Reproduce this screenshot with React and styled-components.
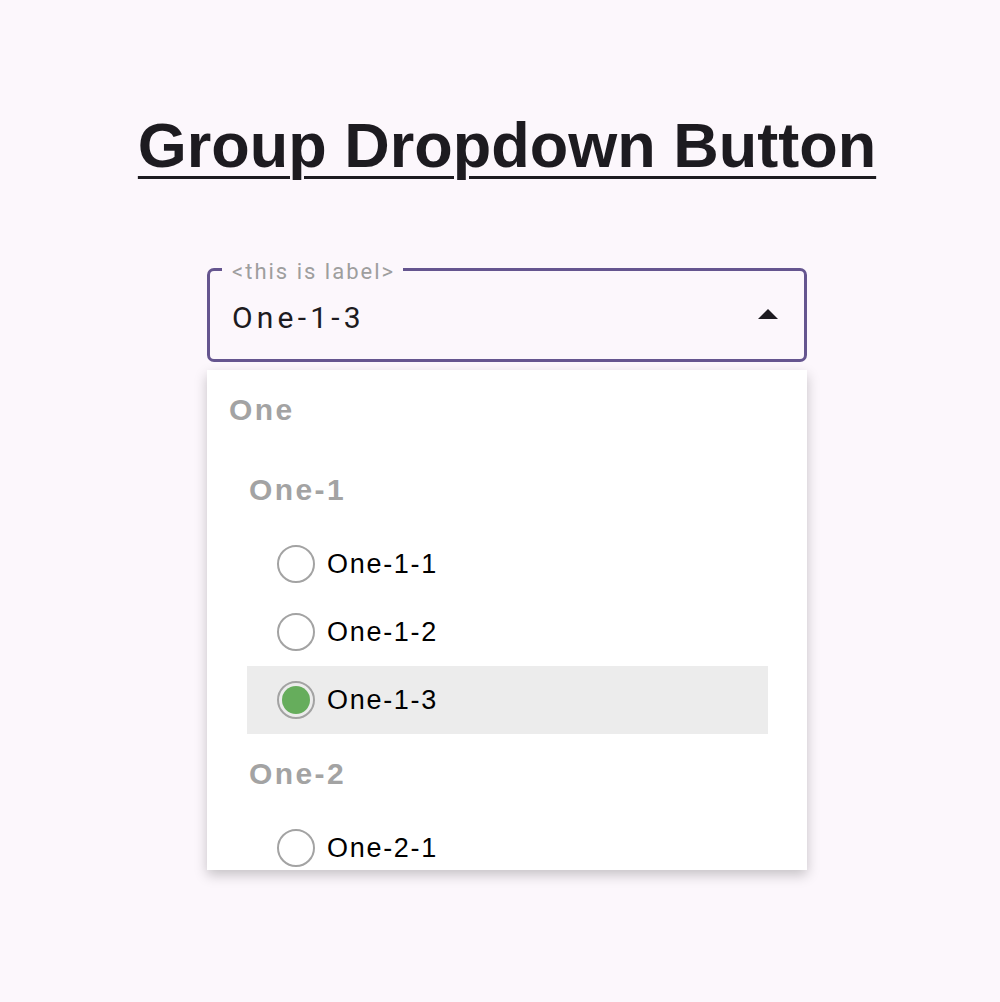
import React from "react";
import styled, { createGlobalStyle } from "styled-components";

const GlobalStyle = createGlobalStyle`
  body {
    margin: 0;
    background: #fcf7fc;
    font-family: "Liberation Sans", Arial, sans-serif;
  }
`;

const Page = styled.div`
  display: flex;
  flex-direction: column;
  align-items: center;
  padding: 109px 0 0 14px;
  min-height: 1002px;
  box-sizing: border-box;
`;

const Title = styled.h1`
  margin: 0;
  font-family: "Liberation Sans", Arial, sans-serif;
  font-size: 63px;
  font-weight: 700;
  line-height: normal;
  color: #1d1b20;
  text-decoration: underline;
  text-decoration-thickness: 3px;
  text-underline-offset: 9px;
`;

const Field = styled.div`
  position: relative;
  margin-top: 87px;
  width: 600px;
  height: 94px;
  box-sizing: border-box;
  border: 3px solid #65558f;
  border-radius: 7px;
  display: flex;
  align-items: center;
  justify-content: space-between;
  padding: 4px 26px 0 22px;
`;

const Label = styled.span`
  position: absolute;
  top: -12px;
  left: 12px;
  padding: 0 8px 0 10px;
  background: #fcf7fc;
  font-family: Roboto, "Liberation Sans", sans-serif;
  font-size: 22px;
  line-height: 26px;
  letter-spacing: 2px;
  color: #9e9e9e;
`;

const Value = styled.span`
  font-family: Roboto, "Liberation Sans", sans-serif;
  font-size: 30px;
  letter-spacing: 4.2px;
  color: #1d1b20;
`;

const Arrow = styled.svg`
  width: 20px;
  height: 10px;
  margin-top: -6px;
  fill: #1d1b20;
`;

const Menu = styled.div`
  margin-top: 8px;
  width: 600px;
  height: 500px;
  overflow: hidden;
  background: #fff;
  box-shadow: 0 5px 12px rgba(0, 0, 0, 0.22);
  padding: 0 39px 0 20px;
  box-sizing: border-box;
`;

const Group = styled.div`
  display: flex;
  flex-direction: column;
  padding-left: ${(p) => (p.$nested ? 20 : 0)}px;
`;

const GroupLabel = styled.div`
  height: 80px;
  display: flex;
  align-items: center;
  padding-left: 2px;
  font-size: 30px;
  font-weight: 700;
  letter-spacing: 2.4px;
  color: #a3a3a3;
`;

const Option = styled.div`
  height: 68px;
  display: flex;
  align-items: center;
  gap: 12px;
  padding-left: 30px;
  background: ${(p) => (p.$selected ? "#ececec" : "transparent")};
  font-size: 27px;
  letter-spacing: 1.7px;
  color: #000;
`;

const Radio = styled.span`
  width: 38px;
  height: 38px;
  box-sizing: border-box;
  border: 2px solid #a3a3a3;
  border-radius: 50%;
  display: flex;
  align-items: center;
  justify-content: center;
  background: ${(p) => (p.$selected ? "transparent" : "#fff")};
  &::after {
    content: "";
    display: ${(p) => (p.$selected ? "block" : "none")};
    width: 28px;
    height: 28px;
    border-radius: 50%;
    background: #66ad5c;
  }
`;

const groups = [
  {
    name: "One",
    children: [
      { name: "One-1", options: ["One-1-1", "One-1-2", "One-1-3"] },
      { name: "One-2", options: ["One-2-1"] },
    ],
  },
];

export default function App() {
  const selected = "One-1-3";

  return (
    <>
      <GlobalStyle />
      <Page>
        <Title>Group Dropdown Button</Title>
        <Field>
          <Label>&lt;this is label&gt;</Label>
          <Value>{selected}</Value>
          <Arrow viewBox="7 9 10 5">
            <path d="M7 14l5-5 5 5z" />
          </Arrow>
        </Field>
        <Menu>
          {groups.map((group) => (
            <Group key={group.name}>
              <GroupLabel>{group.name}</GroupLabel>
              {group.children.map((sub) => (
                <Group $nested key={sub.name}>
                  <GroupLabel>{sub.name}</GroupLabel>
                  {sub.options.map((opt) => (
                    <Option key={opt} $selected={opt === selected}>
                      <Radio $selected={opt === selected} />
                      {opt}
                    </Option>
                  ))}
                </Group>
              ))}
            </Group>
          ))}
        </Menu>
      </Page>
    </>
  );
}
